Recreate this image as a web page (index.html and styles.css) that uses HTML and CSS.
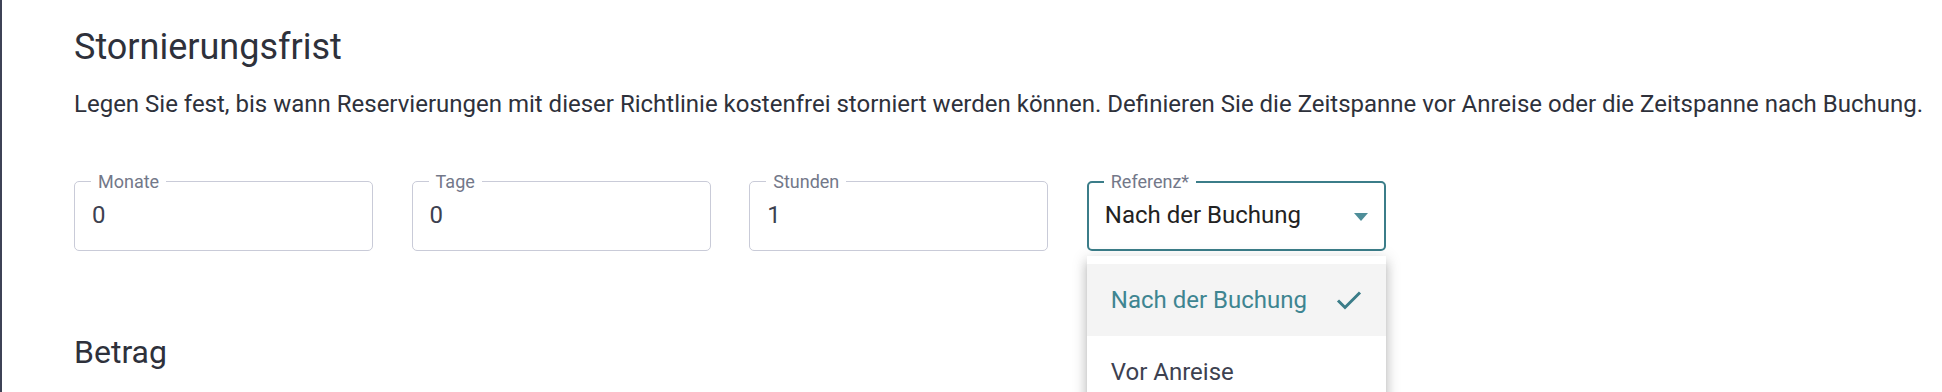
FILE: index.html
```html
<!DOCTYPE html>
<html lang="de">
<head>
<meta charset="utf-8">
<title>Stornierungsfrist</title>
<link rel="stylesheet" href="styles.css">
</head>
<body>
<div class="page">
  <section class="section">
    <h2 class="section-title">Stornierungsfrist</h2>
    <p class="section-desc">Legen Sie fest, bis wann Reservierungen mit dieser Richtlinie kostenfrei storniert werden können. Definieren Sie die Zeitspanne vor Anreise oder die Zeitspanne nach Buchung.</p>
    <div class="fields">
      <div class="field">
        <span class="field-label">Monate</span>
        <span class="field-value">0</span>
      </div>
      <div class="field">
        <span class="field-label">Tage</span>
        <span class="field-value">0</span>
      </div>
      <div class="field">
        <span class="field-label">Stunden</span>
        <span class="field-value">1</span>
      </div>
      <div class="field field--select">
        <span class="field-label">Referenz*</span>
        <span class="field-value field-value--strong">Nach der Buchung</span>
        <svg class="select-arrow" width="14" height="8" viewBox="0 0 14 8"><path d="M0 0 L14 0 L7 8 Z" fill="#4e8e99"/></svg>
        <ul class="menu">
          <li class="menu-item menu-item--selected">
            <span>Nach der Buchung</span>
            <svg class="check" width="26" height="20" viewBox="0 0 26 20"><path d="M2 10.5 L9 17.5 L24 2.5" fill="none" stroke="#3b7d89" stroke-width="3"/></svg>
          </li>
          <li class="menu-item"><span>Vor Anreise</span></li>
        </ul>
      </div>
    </div>
  </section>
  <section class="section section--next">
    <h2 class="section-title section-title--sub">Betrag</h2>
  </section>
</div>
</body>
</html>
```
FILE: styles.css
```css
html, body {
  margin: 0;
  padding: 0;
  overflow: hidden;
  background: #ffffff;
}
body {
  font-family: Roboto, "Liberation Sans", Arial, sans-serif;
  color: #2e313b;
}
.page {
  border-left: 2px solid #3d4256;
  height: 392px;
  padding-left: 72px;
  padding-top: 27px;
  box-sizing: border-box;
}
.section-title {
  margin: 0;
  font-size: 36px;
  line-height: 40px;
  font-weight: 400;
  color: #2e313b;
}
.section-title--sub {
  font-size: 32px;
}
.section-desc {
  margin: 21px 0 0 0;
  font-size: 24px;
  line-height: 32px;
  color: #2e313b;
  white-space: nowrap;
}
.fields {
  margin-top: 61px;
  display: grid;
  grid-template-columns: repeat(4, 299px);
  column-gap: 38.6px;
}
.field {
  position: relative;
  height: 70px;
  box-sizing: border-box;
  border: 1px solid #c9cbd8;
  border-radius: 5px;
  padding: 0 16px 2px 17px;
  display: flex;
  align-items: center;
}
.field-label {
  position: absolute;
  left: 16px;
  top: -10px;
  padding: 0 7px;
  background: #ffffff;
  font-size: 18px;
  line-height: 20px;
  color: #737889;
}
.field-value {
  font-size: 24px;
  line-height: 28px;
  color: #3d4150;
}
.field-value--strong {
  color: #222222;
  flex: 1;
}
.field--select {
  border: 2px solid #3b7d89;
  padding-left: 16px;
  padding-right: 16px;
}
.field--select .field-label {
  left: 15px;
  top: -11px;
}
.select-arrow {
  display: block;
  margin-top: 4px;
}
.menu {
  position: absolute;
  left: -2px;
  top: 73px;
  width: 299px;
  margin: 0;
  padding: 8px 0;
  list-style: none;
  background: #ffffff;
  box-shadow: 0 5px 5px -3px rgba(0,0,0,.2), 0 8px 10px 1px rgba(0,0,0,.14), 0 3px 14px 2px rgba(0,0,0,.12);
  z-index: 2;
}
.menu-item {
  height: 72px;
  display: flex;
  align-items: center;
  justify-content: space-between;
  padding: 0 24px;
  font-size: 24px;
  color: #3d4150;
}
.menu-item--selected {
  background: #f4f4f4;
  color: #3e8591;
}
.check {
  display: block;
}
.section--next {
  margin-top: 81px;
}
```
